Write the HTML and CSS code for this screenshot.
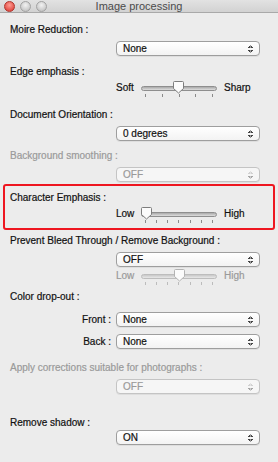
FILE: index.html
```html
<!DOCTYPE html>
<html lang="en">
<head>
    <meta charset="UTF-8">
    <meta name="viewport" content="width=device-width, initial-scale=1.0">
    <title>Image processing</title>
    <link rel="stylesheet" href="styles.css">
</head>
<body>
    <div class="window">
        <header class="titlebar">
            <div class="lights">
                <span class="light close"></span>
                <span class="light"></span>
                <span class="light"></span>
            </div>
            <h1>Image processing</h1>
        </header>

        <div class="content">
            <!-- Moire -->
            <p class="label first">Moire Reduction :</p>
            <div class="popup"><span>None</span><i class="arrows"></i></div>

            <!-- Edge emphasis -->
            <p class="label gap9">Edge emphasis :</p>
            <div class="slider five">
                <span class="lo">Soft</span>
                <div class="track-wrap">
                    <div class="track"></div>
                    <svg class="thumb" style="left: 32px" width="11" height="13" viewBox="0 0 11 13"><path d="M1.5 .5h8a1 1 0 0 1 1 1v6L5.5 12 .5 7.5v-6a1 1 0 0 1 1-1z"/></svg>
                    <div class="ticks"><b></b><b></b><b></b><b></b><b></b></div>
                </div>
                <span class="hi">Sharp</span>
            </div>

            <!-- Orientation -->
            <p class="label gap9">Document Orientation :</p>
            <div class="popup"><span>0 degrees</span><i class="arrows"></i></div>

            <p class="label off gap8">Background smoothing :</p>
            <div class="popup off"><span>OFF</span><i class="arrows"></i></div>

            <!-- highlighted group -->
            <div class="highlight">
                <p class="label">Character Emphasis :</p>
                <div class="slider">
                    <span class="lo">Low</span>
                    <div class="track-wrap">
                        <div class="track"></div>
                        <svg class="thumb" style="left: 0px" width="11" height="13" viewBox="0 0 11 13"><path d="M1.5 .5h8a1 1 0 0 1 1 1v6L5.5 12 .5 7.5v-6a1 1 0 0 1 1-1z"/></svg>
                        <div class="ticks"><b></b><b></b><b></b><b></b><b></b><b></b><b></b></div>
                    </div>
                    <span class="hi">High</span>
                </div>
            </div>

            <p class="label gap4">Prevent Bleed Through / Remove Background :</p>
            <div class="popup"><span>OFF</span><i class="arrows"></i></div>
            <div class="slider off">
                <span class="lo">Low</span>
                <div class="track-wrap">
                    <div class="track"></div>
                    <svg class="thumb" style="left: 33px" width="11" height="13" viewBox="0 0 11 13"><path d="M1.5 .5h8a1 1 0 0 1 1 1v6L5.5 12 .5 7.5v-6a1 1 0 0 1 1-1z"/></svg>
                    <div class="ticks"><b></b><b></b><b></b><b></b><b></b><b></b><b></b></div>
                </div>
                <span class="hi">High</span>
            </div>

            <p class="label gap3">Color drop-out :</p>
            <div class="field first-field">
                <span class="field-name">Front :</span>
                <div class="popup"><span>None</span><i class="arrows"></i></div>
            </div>
            <div class="field">
                <span class="field-name">Back :</span>
                <div class="popup"><span>None</span><i class="arrows"></i></div>
            </div>

            <p class="label off gap12">Apply corrections suitable for photographs :</p>
            <div class="popup off"><span>OFF</span><i class="arrows"></i></div>

            <p class="label gap22">Remove shadow :</p>
            <div class="popup tight"><span>ON</span><i class="arrows"></i></div>
        </div>
    </div>
</body>
</html>
```

FILE: styles.css
```css
body {
    margin: 0;
    padding: 0;
    background-color: #ececec;
    font-family: "Liberation Sans", Arial, sans-serif;
    font-size: 10px;
    color: #111;
    -webkit-text-stroke: 0.2px;
}

.window {
    width: 278px;
    height: 462px;
    overflow: hidden;
    background-color: #ececec;
}

/* title bar */
.titlebar {
    height: 12px;
    background: linear-gradient(#e2e2e2, #d2d2d2);
    border-bottom: 1px solid #a9a9a9;
    display: flex;
    align-items: center;
    justify-content: center;
    position: relative;
}

.titlebar h1 {
    margin: 0;
    font-size: 11px;
    font-weight: normal;
    color: #4b4b4b;
    line-height: 12px;
    -webkit-text-stroke: 0;
}

.lights {
    position: absolute;
    left: 4px;
    top: 1px;
    display: flex;
    gap: 5px;
}

.light {
    width: 11px;
    height: 11px;
    box-sizing: border-box;
    border-radius: 50%;
    background: radial-gradient(circle at 50% 35%, #f2f2f2, #b9b9b9);
    border: 1px solid #a2a2a2;
}

.light.close {
    background: radial-gradient(circle at 50% 35%, #ff9c93, #d8322a);
    border-color: #b0362e;
}

/* content */
.content {
    padding: 10px 18px 0 10px;
}

.label {
    margin: 0;
    line-height: 14px;
    height: 14px;
    white-space: nowrap;
}

.label.off,
.slider.off,
.popup.off span {
    color: #9a9a9a;
}

.gap3 { margin-top: 3px; }
.gap4 { margin-top: 4px; }
.gap8 { margin-top: 8px; }
.gap9 { margin-top: 9px; }
.gap12 { margin-top: 12px; }
.gap22 { margin-top: 22px; }

.popup {
    margin: 4px 0 0 106px;
    height: 15px;
    box-sizing: border-box;
    border: 1px solid #9e9e9e;
    border-radius: 4px;
    background: linear-gradient(#ffffff, #f3f3f3);
    box-shadow: 0 1px 0 rgba(0, 0, 0, 0.06);
    display: flex;
    align-items: center;
    justify-content: space-between;
    padding: 0 6px 0 6px;
    line-height: 13px;
}

.popup.off {
    border-color: #c4c4c4;
    background: #f6f6f6;
}

.popup.tight {
    margin-top: 0;
}

.arrows {
    width: 5px;
    height: 8px;
    background:
        linear-gradient(to top right, transparent 50%, #444 50%) left bottom / 50% 3px no-repeat,
        linear-gradient(to top left, transparent 50%, #444 50%) right bottom / 50% 3px no-repeat;
    position: relative;
}

.arrows::before {
    content: "";
    position: absolute;
    left: 0;
    top: 0;
    width: 5px;
    height: 3px;
    background:
        linear-gradient(to bottom right, transparent 50%, #444 50%) left top / 50% 3px no-repeat,
        linear-gradient(to bottom left, transparent 50%, #444 50%) right top / 50% 3px no-repeat;
}

.popup.off .arrows,
.popup.off .arrows::before {
    opacity: 0.45;
}

/* sliders */
.slider {
    margin: 2px 0 0 106px;
    height: 18px;
    display: flex;
    align-items: flex-start;
    line-height: 14px;
}

.slider .lo {
    width: 25px;
}

.slider .hi {
    margin-left: 7px;
}

.track-wrap {
    width: 76px;
    height: 18px;
    position: relative;
}

.track {
    margin-top: 5px;
    height: 3px;
    border: 1px solid #8e8e8e;
    border-radius: 3px;
    background: linear-gradient(#a9a9a9, #dedede);
}

.thumb {
    position: absolute;
    top: 0;
}

.thumb path {
    fill: #fbfbfb;
    stroke: #7d7d7d;
    stroke-width: 1;
}

.ticks {
    display: flex;
    justify-content: space-between;
    padding: 0 4px;
    margin-top: 3px;
}

.ticks b {
    width: 1px;
    height: 3px;
    background-color: #8a8a8a;
}

.slider.off .track {
    border-color: #bdbdbd;
    background: linear-gradient(#c8c8c8, #e8e8e8);
}

.slider.off .thumb path {
    stroke: #b3b3b3;
}

.slider.off .ticks b {
    background-color: #bcbcbc;
}

/* highlighted group */
.highlight {
    margin: 2px -15px 0 -7px;
    border: 2px solid #ee1620;
    border-radius: 3px;
    padding: 5px 5px 3px 5px;
}

/* color drop-out rows */
.field {
    display: flex;
    align-items: center;
    margin-top: 7px;
}

.first-field {
    margin-top: 8px;
}

.field-name {
    width: 101px;
    text-align: right;
    padding-right: 5px;
}

.field .popup {
    margin: 0;
    flex: 1;
}
```
